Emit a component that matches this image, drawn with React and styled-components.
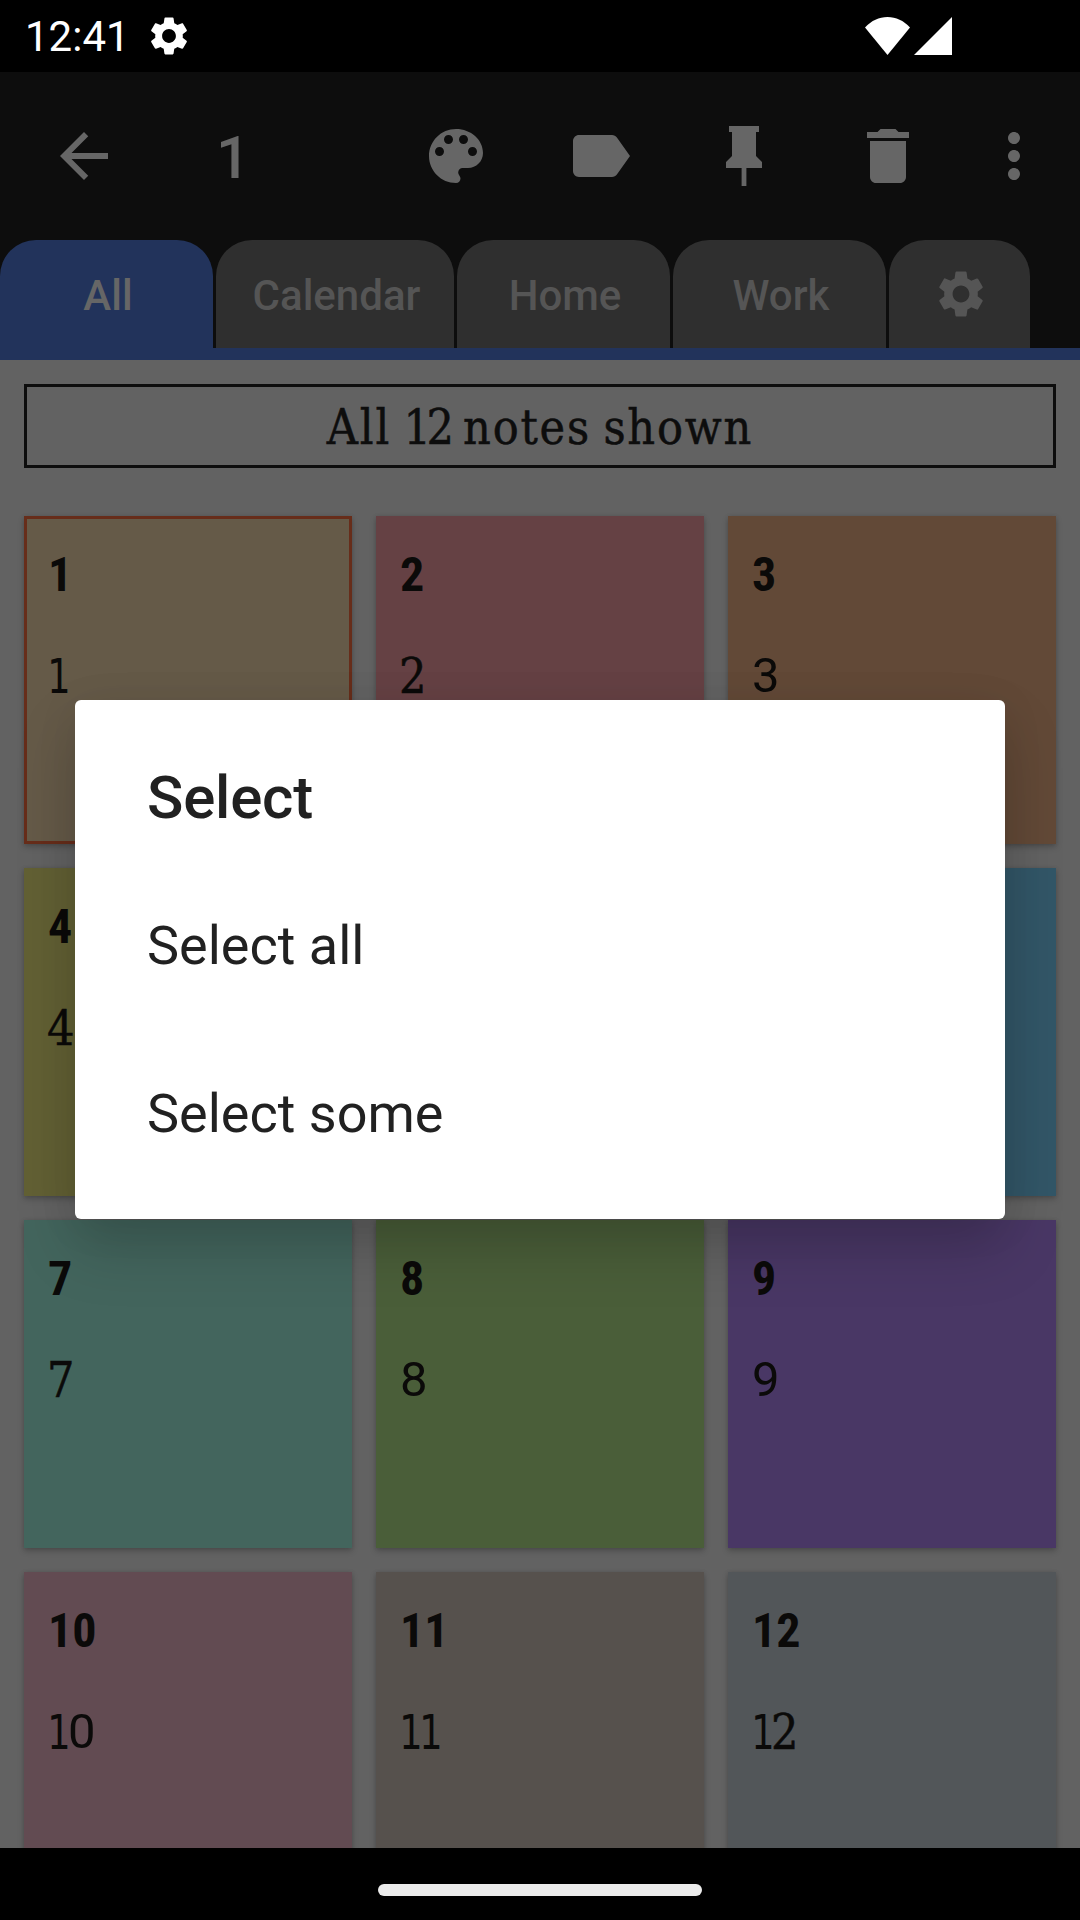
import React from "react";
import styled, { createGlobalStyle, css } from "styled-components";

const GlobalStyle = createGlobalStyle`
  * { box-sizing: border-box; }
  html, body { margin: 0; padding: 0; background: #000; }
  body { width: 1080px; height: 1920px; overflow: hidden; font-family: Roboto, "Liberation Sans", sans-serif; }
`;

const Screen = styled.div`
  position: relative;
  display: flex;
  flex-direction: column;
  width: 1080px;
  height: 1920px;
  overflow: hidden;
  background: #626262;
`;

const StatusBar = styled.header`
  display: flex;
  align-items: center;
  flex: none;
  height: 72px;
  padding: 0 128px 0 25px;
  background: #000;
  color: #fff;
`;

const Clock = styled.span`
  width: 121px;
  font-size: 42px;
  line-height: 72px;
  padding-top: 2px;
  white-space: nowrap;
`;

const StatusIcons = styled.div`
  display: flex;
  align-items: flex-start;
  gap: 4px;
  margin-left: auto;
`;

const Glyph = styled.svg`
  display: block;
  flex: none;
  width: ${(p) => p.$w}px;
  height: ${(p) => p.$h || p.$w}px;
  fill: currentColor;
`;

const Toolbar = styled.nav`
  display: flex;
  align-items: center;
  flex: none;
  height: 168px;
  padding: 0 12px;
  background: #0d0d0d;
  color: #666;
`;

const ToolButton = styled.button`
  display: flex;
  align-items: center;
  justify-content: center;
  width: ${(p) => p.$w || 144}px;
  height: 144px;
  padding: 0;
  border: 0;
  background: none;
  color: inherit;
`;

const Count = styled.span`
  flex: 1;
  padding: 4px 0 0 60px;
  font-size: 60px;
  font-weight: 500;
  line-height: 72px;
`;

const Tabs = styled.div`
  display: flex;
  gap: 3px;
  flex: none;
  height: 120px;
  background: #0d0d0d;
  border-bottom: 12px solid #22335b;
`;

const Tab = styled.div`
  display: flex;
  align-items: center;
  justify-content: center;
  width: ${(p) => p.$w}px;
  height: 108px;
  padding: ${(p) => (p.$icon ? "0 0 0 2px" : "2px 0 0 3px")};
  border-radius: 36px 36px 0 0;
  background: ${(p) => (p.$active ? "#22335b" : "#2f2f2f")};
  color: ${(p) => (p.$active ? "#666" : "#555")};
  font-size: 42px;
  font-weight: 500;
`;

const Content = styled.main`
  flex: 1;
  min-height: 0;
  overflow: hidden;
  padding: 24px 24px 0;
`;

const slab = css`
  font-family: "Roboto Slab", "DejaVu Serif Condensed", "DejaVu Serif", serif;
  -webkit-text-stroke: 0.5px currentColor;
`;

const Banner = styled.div`
  height: 84px;
  margin-bottom: 48px;
  padding-top: 2px;
  border: 3px solid #0d0d0d;
  color: #0d0d0d;
  ${slab}
  font-size: 48px;
  line-height: 76px;
  letter-spacing: 1.8px;
  word-spacing: -3px;
  text-align: center;
  white-space: nowrap;
`;

const Total = styled.span`
  margin-right: 1px;
  letter-spacing: -4.5px;
`;

const Grid = styled.div`
  display: grid;
  grid-template-columns: repeat(3, 328px);
  grid-auto-rows: 328px;
  gap: 24px;
`;

const Card = styled.article`
  padding: 31px 24px 0;
  background: ${(p) => p.$color};
  color: #0b0a09;
  box-shadow: 0 3px 6px rgba(0, 0, 0, 0.22), 0 0 4px rgba(0, 0, 0, 0.08)${(p) =>
    p.$selected ? ", inset 0 0 0 3px #672d1a" : ""};
`;

const CardTitle = styled.h2`
  margin: 0 0 45px;
  font-family: "Roboto Condensed", Roboto, sans-serif;
  font-stretch: 75%;
  font-size: 48px;
  font-weight: 700;
  line-height: 56px;
`;

const CardBody = styled.p`
  display: flex;
  margin: 0;
  font-size: 48px;
  line-height: 56px;
`;

const RoundDigit = styled.span`
  font-family: Roboto, sans-serif;
  font-size: 49px;
  font-weight: 400;
`;

const SerifDigit = styled.span`
  ${slab}
  margin-left: -1px;
`;

const OneDigit = styled.span`
  width: 20px;
  transform: scaleX(0.85);
  transform-origin: left;
  text-indent: -1px;
  font-family: "DejaVu Sans Condensed", "DejaVu Sans", sans-serif;
`;

const NavBar = styled.footer`
  display: flex;
  justify-content: center;
  flex: none;
  height: 72px;
  padding-top: 36px;
  background: #000;
`;

const Handle = styled.div`
  width: 324px;
  height: 12px;
  border-radius: 6px;
  background: #ebebeb;
`;

const Dialog = styled.section`
  position: absolute;
  left: 75px;
  top: 700px;
  width: 930px;
  height: 519px;
  border-radius: 6px;
  background: #fff;
  color: #212121;
  box-shadow: 0 30px 60px rgba(0, 0, 0, 0.17), 0 6px 44px rgba(0, 0, 0, 0.07);
`;

const DialogTitle = styled.h1`
  display: flex;
  align-items: center;
  height: 161px;
  margin: 0;
  padding: 33px 72px 0;
  font-size: 60px;
  font-weight: 500;
  letter-spacing: -0.2px;
`;

const Option = styled.div`
  display: flex;
  align-items: center;
  height: 168px;
  padding: 0 72px;
  font-size: 54px;
`;

const PATHS = {
  settings:
    "M19.14 12.94c.04-.3.06-.61.06-.94 0-.32-.02-.64-.07-.94l2.03-1.58c.18-.14.23-.41.12-.61l-1.92-3.32c-.12-.22-.37-.29-.59-.22l-2.39.96c-.5-.38-1.03-.7-1.62-.94l-.36-2.54c-.04-.24-.24-.41-.48-.41h-3.84c-.24 0-.43.17-.47.41l-.36 2.54c-.59.24-1.13.57-1.62.94l-2.39-.96c-.22-.08-.47 0-.59.22L2.74 8.87c-.12.21-.08.47.12.61l2.03 1.58c-.05.3-.09.63-.09.94s.02.64.07.94l-2.03 1.58c-.18.14-.23.41-.12.61l1.92 3.32c.12.22.37.29.59.22l2.39-.96c.5.38 1.03.7 1.62.94l.36 2.54c.05.24.24.41.48.41h3.84c.24 0 .44-.17.47-.41l.36-2.54c.59-.24 1.13-.56 1.62-.94l2.39.96c.22.08.47 0 .59-.22l1.92-3.32c.12-.22.07-.47-.12-.61l-2.01-1.58zM12 15.6c-1.98 0-3.6-1.62-3.6-3.6s1.62-3.6 3.6-3.6 3.6 1.62 3.6 3.6-1.62 3.6-3.6 3.6z",
  back: "M20 11H7.83l5.59-5.59L12 4l-8 8 8 8 1.41-1.41L7.83 13H20v-2z",
  palette:
    "M12 3c-4.97 0-9 4.03-9 9s4.03 9 9 9c.83 0 1.5-.67 1.5-1.5 0-.39-.15-.74-.39-1.01-.23-.26-.38-.61-.38-.99 0-.83.67-1.5 1.5-1.5H16c2.76 0 5-2.24 5-5 0-4.42-4.03-8-9-8zm-5.5 9c-.83 0-1.5-.67-1.5-1.5S5.67 9 6.5 9 8 9.67 8 10.5 7.33 12 6.5 12zm3-4C8.67 8 8 7.33 8 6.5S8.67 5 9.5 5s1.5.67 1.5 1.5S10.33 8 9.5 8zm5 0c-.83 0-1.5-.67-1.5-1.5S13.67 5 14.5 5s1.5.67 1.5 1.5S15.33 8 14.5 8zm3 4c-.83 0-1.5-.67-1.5-1.5S16.67 9 17.5 9s1.5.67 1.5 1.5-.67 1.5-1.5 1.5z",
  label:
    "M17.63 5.84C17.27 5.33 16.67 5 16 5L5 5.01C3.9 5.01 3 5.9 3 7v10c0 1.1.9 1.99 2 1.99L16 19c.67 0 1.27-.33 1.63-.84L22 12l-4.37-6.16z",
  pin: "M16 12V4H17V2H7V4H8V12L6 14V16H11.2V22H12.8V16H18V14L16 12Z",
  trash:
    "M6 19c0 1.1.9 2 2 2h8c1.1 0 2-.9 2-2V7H6v12zM19 4h-3.5l-1-1h-5l-1 1H5v2h14V4z",
  more: "M12 8c1.1 0 2-.9 2-2s-.9-2-2-2-2 .9-2 2 .9 2 2 2zm0 2c-1.1 0-2 .9-2 2s.9 2 2 2 2-.9 2-2-.9-2-2-2zm0 6c-1.1 0-2 .9-2 2s.9 2 2 2 2-.9 2-2-.9-2-2-2z",
};

const Icon = ({ name, size = 72 }) => (
  <Glyph $w={size} viewBox="0 0 24 24" aria-hidden="true">
    <path d={PATHS[name]} />
  </Glyph>
);

const TABS = [
  { label: "All", width: 213, active: true },
  { label: "Calendar", width: 238 },
  { label: "Home", width: 213 },
  { label: "Work", width: 213 },
];

const NOTES = [
  "#655a48", "#654144", "#624937",
  "#626034", "#3c5c43", "#325667",
  "#43655d", "#4a5e39", "#493765",
  "#624b52", "#56514d", "#525659",
];

const digitFor = (d) => {
  if (d === "1") return OneDigit;
  return "247".includes(d) ? SerifDigit : RoundDigit;
};

const NoteNumber = ({ value }) => (
  <CardBody>
    {String(value)
      .split("")
      .map((d, i) => {
        const Digit = digitFor(d);
        return <Digit key={i}>{d}</Digit>;
      })}
  </CardBody>
);

export default function App() {
  return (
    <>
      <GlobalStyle />
      <Screen>
        <StatusBar>
          <Clock>12:41</Clock>
          <Icon name="settings" size={46} />
          <StatusIcons>
            <Glyph $w={45} $h={38} viewBox="0 0 45 38">
              <path d="M0 10.500C6.500 3.500 14 0 22.500 0S38.500 3.500 45 10.500L22.500 38Z" />
            </Glyph>
            <Glyph $w={38} $h={38} viewBox="0 0 38 38">
              <path d="M38 0V38H0Z" />
            </Glyph>
          </StatusIcons>
        </StatusBar>
        <Toolbar>
          <ToolButton aria-label="Back">
            <Icon name="back" />
          </ToolButton>
          <Count>1</Count>
          {["palette", "label", "pin", "trash"].map((name) => (
            <ToolButton key={name} aria-label={name}>
              <Icon name={name} />
            </ToolButton>
          ))}
          <ToolButton $w={108} aria-label="More">
            <Icon name="more" />
          </ToolButton>
        </Toolbar>
        <Tabs>
          {TABS.map((t) => (
            <Tab key={t.label} $w={t.width} $active={t.active}>
              {t.label}
            </Tab>
          ))}
          <Tab $w={141} $icon>
            <Icon name="settings" size={56} />
          </Tab>
        </Tabs>
        <Content>
          <Banner>
            All <Total>12</Total> notes shown
          </Banner>
          <Grid>
            {NOTES.map((color, i) => (
              <Card key={color} $color={color} $selected={i === 0}>
                <CardTitle>{i + 1}</CardTitle>
                <NoteNumber value={i + 1} />
              </Card>
            ))}
          </Grid>
        </Content>
        <NavBar>
          <Handle />
        </NavBar>
        <Dialog role="dialog">
          <DialogTitle>Select</DialogTitle>
          <Option>Select all</Option>
          <Option>Select some</Option>
        </Dialog>
      </Screen>
    </>
  );
}
